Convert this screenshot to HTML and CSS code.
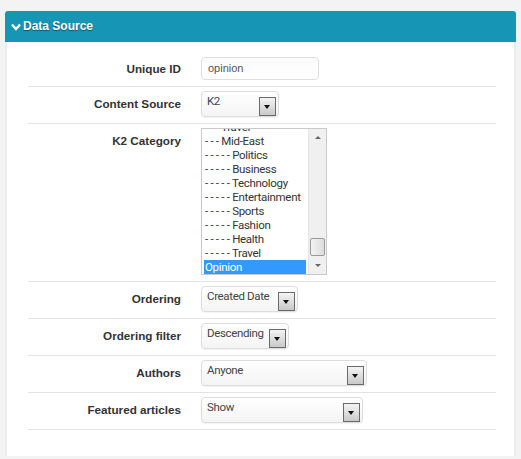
FILE: index.html
```html
<!DOCTYPE html>
<html lang="en">
<head>
  <meta charset="UTF-8">
  <title>Data Source</title>
  <link rel="stylesheet" href="styles.css">
</head>
<body>
  <div class="panel">
    <div class="panel-head">
      <svg class="chevron" width="10" height="8" viewBox="0 0 10 8"><polyline points="1,1.5 5,6 9,1.5" fill="none" stroke="#fff" stroke-width="2.4"/></svg>
      Data Source
    </div>
    <div class="panel-body">
      <div class="row">
        <label class="label short">Unique ID</label>
        <div class="input">opinion</div>
      </div>

      <div class="row">
        <label class="label">Content Source</label>
        <div class="select w-77">K2<span class="arrow"></span></div>
      </div>

      <div class="row">
        <label class="label">K2 Category</label>
        <div class="listbox">
          <div class="items">
            <div class="item">- - - Travel</div>
            <div class="item">- - - Mid-East</div>
            <div class="item">- - - - - Politics</div>
            <div class="item">- - - - - Business</div>
            <div class="item">- - - - - Technology</div>
            <div class="item">- - - - - Entertainment</div>
            <div class="item">- - - - - Sports</div>
            <div class="item">- - - - - Fashion</div>
            <div class="item">- - - - - Health</div>
            <div class="item">- - - - - Travel</div>
            <div class="item selected">Opinion</div>
          </div>
          <div class="scrollbar">
            <span class="sb-up"></span>
            <span class="sb-thumb"></span>
            <span class="sb-down"></span>
          </div>
        </div>
      </div>

      <div class="row">
        <label class="label">Ordering</label>
        <div class="select w-96">Created Date<span class="arrow"></span></div>
      </div>

      <div class="row">
        <label class="label">Ordering filter</label>
        <div class="select w-87">Descending<span class="arrow"></span></div>
      </div>

      <div class="row">
        <label class="label">Authors</label>
        <div class="select w-165">Anyone<span class="arrow"></span></div>
      </div>

      <div class="row">
        <label class="label">Featured articles</label>
        <div class="select w-161">Show<span class="arrow"></span></div>
      </div>
    </div>
  </div>
</body>
</html>
```

FILE: styles.css
```css
/* page */
body {
  margin: 0;
  padding: 11px 0 0 5px;
  background: #f3f3f3;
  font-family: "Liberation Sans", Arial, sans-serif;
  color: #333;
}
.panel {
  width: 511px;
}
.panel-head {
  height: 31px;
  background: #1795b5;
  border-radius: 3px 3px 0 0;
  color: #fff;
  font-weight: bold;
  font-size: 12px;
  line-height: 31px;
  padding-left: 6px;
  text-shadow: 0 1px 1px rgba(0, 0, 0, 0.45);
  display: flex;
  align-items: center;
  gap: 2px;
}
.chevron {
  margin-top: 1px;
}
.panel-body {
  background: #fff;
  border-left: 2px solid #ececec;
  border-right: 2px solid #ececec;
  padding: 11px 18px 26px 21px;
}

/* rows */
.row {
  display: flex;
  align-items: flex-start;
  gap: 20px;
  padding: 4px 0 6px;
  border-bottom: 1px solid #e3e3e3;
}
.label {
  width: 153px;
  text-align: right;
  font-weight: bold;
  font-size: 11.7px;
  line-height: 26px;
  color: #333;
}
.label.short {
  line-height: 23px;
}

/* controls */
.input {
  width: 110px;
  height: 21px;
  border: 1px solid #dedede;
  border-radius: 4px;
  padding-left: 6px;
  font-size: 11px;
  line-height: 21px;
  color: #555;
  background: linear-gradient(#fbfbfb, #fff);
}
.select {
  position: relative;
  box-sizing: border-box;
  height: 26px;
  border: 1px solid #dcdcdc;
  border-radius: 4px;
  padding-left: 5px;
  font-family: Roboto, "Liberation Sans", sans-serif;
  font-size: 11.5px;
  letter-spacing: -0.35px;
  line-height: 19px;
  color: #444;
  background: linear-gradient(#fff, #f4f4f4);
  box-shadow: 0 1px 1px rgba(0, 0, 0, 0.05);
}
.w-77 { width: 78px; }
.w-96 { width: 97px; }
.w-87 { width: 88px; }
.w-165 { width: 166px; }
.w-161 { width: 162px; }

.arrow {
  position: absolute;
  right: 2px;
  top: 5px;
  width: 15px;
  height: 17px;
  border: 1px solid #6a6a6a;
  background: linear-gradient(#f4f4f4, #c9c9c9);
}
.arrow::after {
  content: "";
  position: absolute;
  left: 4px;
  top: 7px;
  border-left: 3.5px solid transparent;
  border-right: 3.5px solid transparent;
  border-top: 4px solid #111;
}

/* list */
.listbox {
  width: 124px;
  height: 145px;
  border: 1px solid #c9c9c9;
  display: flex;
  overflow: hidden;
  background: #fff;
}
.items {
  flex: 1;
  margin-top: -9px;
  padding: 0 2px;
  font-family: Roboto, "Liberation Sans", sans-serif;
  font-size: 11.5px;
  letter-spacing: -0.3px;
  color: #333;
}
.item {
  height: 14px;
  line-height: 14px;
  padding-left: 1px;
  white-space: nowrap;
}
.item.selected {
  background: #3399ff;
  color: #fff;
}
.scrollbar {
  width: 17px;
  background: #f0f0f0;
  border-left: 1px solid #e4e4e4;
  display: flex;
  flex-direction: column;
  align-items: center;
}
.sb-up, .sb-down {
  width: 0;
  height: 0;
  border-left: 3px solid transparent;
  border-right: 3px solid transparent;
}
.sb-up {
  margin-top: 7px;
  border-bottom: 3px solid #666;
}
.sb-down {
  margin-top: 8px;
  margin-bottom: 7px;
  border-top: 3px solid #666;
}
.sb-thumb {
  margin-top: auto;
  width: 13px;
  height: 16px;
  border: 1px solid #9a9a9a;
  border-radius: 2px;
  background: linear-gradient(90deg, #f4f4f4, #dcdcdc);
}
```
